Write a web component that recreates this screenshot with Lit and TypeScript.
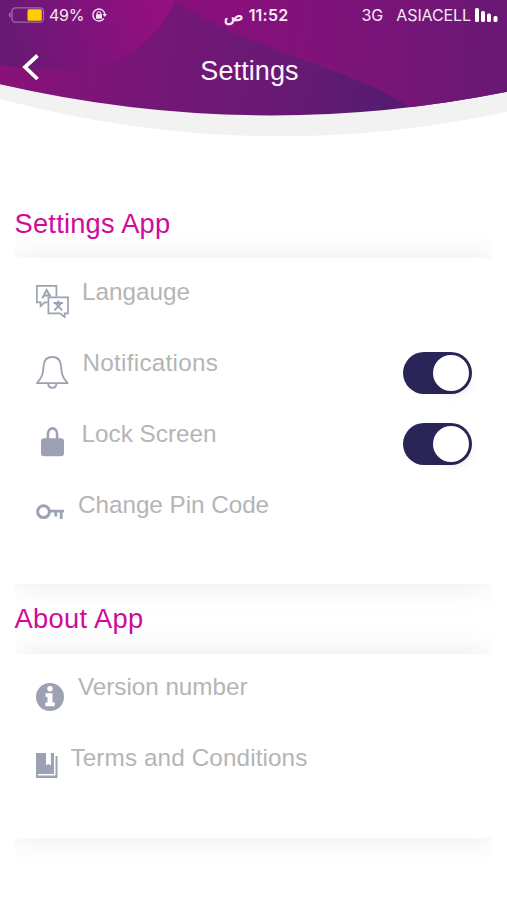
import { LitElement, html, svg, css } from "lit";
import { customElement } from "lit/decorators.js";

const INK = "#9ca2b4";

const icons: Record<string, unknown> = {
  language: svg`<g fill="none" stroke=${INK} stroke-width="1.7">
    <path d="M11.600 17.400H8.800L4.600 21.200V17.400H.9V.9H20.400V11.600"/>
    <path d="M12.400 12.400H32V28.400H28.600V32L23.800 28.400H12.400Z"/>
    <path d="M6.400 13.200L10.600 5L14.400 11.600M8.200 10.400H13.400" stroke-width="2"/>
    <path d="M17.600 18H27M22.300 15.400V18M18.400 25.400L22.300 21.200L26.200 25.400M19.600 18.400L22.300 21.200L25 18.400" stroke-width="1.900"/></g>`,
  bell: svg`<g fill="none" stroke=${INK} stroke-width="1.8" stroke-linejoin="round">
    <path d="M16.300 1C10.600 1 8 5 7.600 9.600C7.200 16 7 20.600 1 27.200H31.600C25.600 20.600 25.400 16 25 9.600C24.600 5 22 1 16.300 1Z"/>
    <path d="M12.200 27.600C12.400 33.200 20.200 33.200 20.400 27.600"/></g>`,
  lock: svg`<path d="M6.900 12V7.500C6.900 -.7 16.100 -.7 16.100 7.500V12" fill="none" stroke=${INK} stroke-width="2.600"/>
    <rect x="0" y="11.200" width="23" height="18" rx="3.200" fill=${INK}/>`,
  key: svg`<circle cx="7.500" cy="7.700" r="5.900" fill="none" stroke=${INK} stroke-width="3"/>
    <path d="M13.500 7.100H28M19.800 7V12.600M25.200 7V15" fill="none" stroke=${INK} stroke-width="2.800"/>`,
  info: svg`<circle cx="14" cy="14" r="14" fill=${INK}/>
    <circle cx="14" cy="5.800" r="2.700" fill="#fff"/>
    <path d="M9.600 10.200H16.500V19.600H18.700V23.200H9.400V19.600H11.500V13.700H9.600Z" fill="#fff"/>`,
  book: svg`<path d="M0 0H10V12.600L12.300 10.800L14.900 12.600V0H18V21H1.900V22.500H19.500V3H21.500V25H0Z" fill=${INK}/>`,
};

interface Row { label: string; icon: string; w: number; h: number; toggle?: boolean; }

const settings: Row[] = [
  { label: "Langauge", icon: "language", w: 33, h: 33 },
  { label: "Notifications", icon: "bell", w: 33, h: 33, toggle: true },
  { label: "Lock Screen", icon: "lock", w: 23, h: 30, toggle: true },
  { label: "Change Pin Code", icon: "key", w: 28, h: 15 },
];
const about: Row[] = [
  { label: "Version number", icon: "info", w: 28, h: 28 },
  { label: "Terms and Conditions", icon: "book", w: 22, h: 25 },
];

@customElement("app-root")
export class AppRoot extends LitElement {
  static styles = css`
    :host { display: block; height: 900px; overflow: hidden; background: #fff; font-family: "Liberation Sans", Arial, sans-serif; }
    * { box-sizing: border-box; }
    svg { display: block; flex: none; overflow: visible; }
    .header { position: relative; z-index: 0; height: 208px; color: #f8e9f6; }
    .art { position: absolute; top: 0; left: 0; z-index: -1; }
    .status { display: grid; grid-template-columns: 1fr auto 1fr; align-items: center; height: 30px; padding: 0 9px 0 8px; font: 16px/30px Inter, sans-serif; }
    .left, .right { display: flex; align-items: center; }
    .right { justify-content: flex-end; }
    .percent { margin: 0 8px 0 5px; letter-spacing: -.25px; }
    .time { display: flex; flex-direction: row-reverse; gap: 6px; margin-left: 6px; font-weight: 600; letter-spacing: .2px; }
    .carrier { margin: 0 4px 0 13px; letter-spacing: -.1px; }
    .nav { display: grid; grid-template-columns: 1fr auto 1fr; align-items: center; height: 82px; padding: 0 9px 0 22px; }
    .back { margin-top: -8px; }
    .title { margin: 0 0 0 -21px; color: #fcf3fb; font-size: 27px; font-weight: 400; line-height: 32px; letter-spacing: .1px; }
    .heading { position: relative; z-index: 1; margin: 0; height: 50px; padding-left: 14.500px; color: #cf0c99; font-size: 27.300px; font-weight: 400; line-height: 32px; letter-spacing: .22px; }
    .panel { margin: 0 15px; padding: 0 20px 0 21px; background: #fff; box-shadow: 0 0 32px rgba(0,0,0,.085); clip-path: inset(-40px 0); }
    .settings { height: 326px; }
    .about-heading { height: 51px; margin-top: 19px; letter-spacing: .33px; }
    .about { height: 184px; }
    .row { display: flex; height: 70.800px; color: #b5b5b5; }
    .label { margin-top: 19px; font-size: 24.300px; line-height: 30px; white-space: nowrap; }
    .bell + .label { letter-spacing: .26px; }
    .key + .label { margin-top: 20px; letter-spacing: -.05px; }
    .info + .label, .book + .label { margin-top: 18px; }
    .info + .label { letter-spacing: -.05px; }
    .book + .label { letter-spacing: .1px; }
    .language { margin: 27px 13px 0 0; }
    .bell { margin: 27px 13.500px 0 0; }
    .lock { margin: 27px 18px 0 4.500px; }
    .key { margin: 34px 14px 0 0; }
    .info { margin: 29px 14px 0 0; }
    .book { margin: 28.500px 12.500px 0 0; }
    .toggle { width: 69px; height: 42px; margin: 23px 0 0 auto; padding: 3px; border-radius: 21px; background: #292657; }
    .knob { width: 36px; height: 36px; margin-left: 27px; border-radius: 50%; background: #fff; box-shadow: 2px 5px 8px rgba(0,0,0,.08); }
  `;

  private row(r: Row) {
    return html`<div class="row">
      <svg class=${r.icon} width=${r.w} height=${r.h}>${icons[r.icon]}</svg>
      <span class="label">${r.label}</span>
      ${r.toggle ? html`<div class="toggle"><div class="knob"></div></div>` : null}
    </div>`;
  }

  render() {
    return html`
      <header class="header">
        <svg class="art" width="507" height="140">
          <defs>
            <clipPath id="c"><path d="M0 0H507V91.700Q253.500 142.600 0 84.300Z"/></clipPath>
            <linearGradient id="base" gradientUnits="userSpaceOnUse" x1="0" y1="70" x2="410" y2="110"><stop offset="0" stop-color="#8a1179"/><stop offset=".4" stop-color="#741777"/><stop offset=".7" stop-color="#671974"/><stop offset="1" stop-color="#521c70"/></linearGradient>
            <linearGradient id="l" gradientUnits="userSpaceOnUse" x1="0" y1="50" x2="160" y2="10"><stop offset="0" stop-color="#641a73"/><stop offset=".4" stop-color="#79157a"/><stop offset="1" stop-color="#940f80"/></linearGradient>
            <linearGradient id="r" gradientUnits="userSpaceOnUse" x1="230" y1="40" x2="507" y2="50"><stop offset="0" stop-color="#88107c"/><stop offset=".55" stop-color="#791578"/><stop offset="1" stop-color="#681874"/></linearGradient>
          </defs>
          <path d="M0 0H507V111.700Q253.500 166.600 0 99Z" fill="#f2f2f2"/>
          <g clip-path="url(#c)">
            <rect width="507" height="120" fill="url(#base)"/>
            <path d="M0 0H176C160 34 134 56 100 66Q50 74 0 65Z" fill="url(#l)"/>
            <path d="M173 0C200 18 235 34 280 51C330 70 375 83 413 110H507V0Z" fill="url(#r)"/>
          </g>
        </svg>
        <div class="status">
          <div class="left">
            <svg width="36" height="16"><path d="M2.500 5Q-1 8 2.500 11Z" fill="#a875b0"/><rect x="4" y=".8" width="31.500" height="14.400" rx="3.500" fill="none" stroke="#a06aaa" stroke-width="1.300"/><rect x="19.500" y="2.300" width="14.300" height="11.400" rx="1.500" fill="#ffcc02"/></svg>
            <span class="percent">49%</span>
            <svg width="15" height="14" fill="none" stroke="#f5e3f3" stroke-width="1.400"><path d="M11.800 10.500A6 6 0 1 1 12.800 6"/><path d="M10.500 6H15L12.800 9Z" fill="#f5e3f3" stroke="none"/><rect x="4" y="6.200" width="6" height="4.500" fill="#f5e3f3" stroke="none"/><path d="M5.200 6.500V5Q7 2.500 8.800 5V6.500" stroke-width="1.100"/></svg>
          </div>
          <div class="time"><span>11:52</span><span>ص</span></div>
          <div class="right"><span>3G</span><span class="carrier">ASIACELL</span>
            <svg width="23" height="14" fill="#fff"><rect width="4" height="14" rx="1.500"/><rect x="6" y="3" width="4" height="11" rx="1.500"/><rect x="12" y="5.500" width="4" height="8.500" rx="1.500"/><rect x="18.500" y="8" width="4" height="6" rx="1.500"/></svg>
          </div>
        </div>
        <div class="nav">
          <svg class="back" width="17" height="26"><path d="M15.500 1.500L3 13L15.500 25" fill="none" stroke="#fff" stroke-width="3.800"/></svg>
          <h1 class="title">Settings</h1>
        </div>
      </header>
      <h2 class="heading">Settings App</h2>
      <section class="panel settings">${settings.map((r) => this.row(r))}</section>
      <h2 class="heading about-heading">About App</h2>
      <section class="panel about">${about.map((r) => this.row(r))}</section>
    `;
  }
}
